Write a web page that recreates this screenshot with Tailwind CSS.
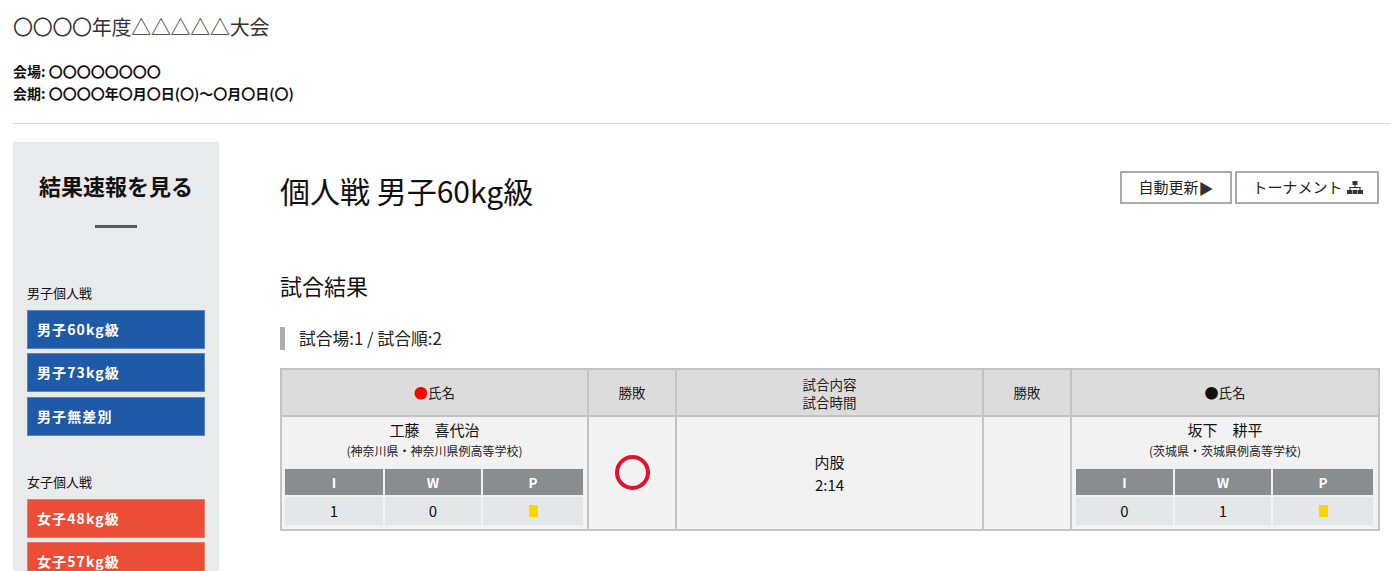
<!DOCTYPE html>
<html lang="ja">
<head>
<meta charset="utf-8">
<script src="https://cdn.jsdelivr.net/npm/@tailwindcss/browser@4"></script>
</head>
<body class="h-[571px] overflow-hidden bg-white text-[#111] font-['Noto_Sans_CJK_JP','Noto_Sans',sans-serif]">
<header class="ml-[13px] h-[124px] border-b border-[#ddd] pt-[12px]">
  <h1 class="text-[20px] leading-[30px] font-normal tracking-[-0.3px] text-[#333]">〇〇〇〇年度△△△△△大会</h1>
  <div class="mt-[18px] text-[14px] leading-[22px] font-bold">
    <p>会場: 〇〇〇〇〇〇〇〇</p>
    <p>会期: 〇〇〇〇年〇月〇日(〇)～〇月〇日(〇)</p>
  </div>
</header>
<div class="flex mt-[18px] ml-[13px] mr-[12px] items-start">
  <aside class="w-[206px] h-[440px] shrink-0 bg-[#e9eaec] px-[14px]">
    <h2 class="mt-[26px] text-center text-[22px] leading-[34px] font-bold">結果速報を見る</h2>
    <div class="mx-auto mt-[23px] h-[3px] w-[42px] bg-[#5b5b5b]"></div>
    <p class="mt-[56px] text-[13px] leading-[18px]">男子個人戦</p>
    <ul class="mt-[8px] flex flex-col gap-[4.4px] text-[14px] font-bold tracking-[1.1px] text-white">
      <li class="h-[39px] border border-[#5c84bd] bg-[#1f5aa9] pl-[9px] leading-[36px]">男子60kg級</li>
      <li class="h-[39px] border border-[#5c84bd] bg-[#1f5aa9] pl-[9px] leading-[36px]">男子73kg級</li>
      <li class="h-[39px] border border-[#5c84bd] bg-[#1f5aa9] pl-[9px] leading-[36px]">男子無差別</li>
    </ul>
    <p class="mt-[37px] text-[13px] leading-[18px]">女子個人戦</p>
    <ul class="mt-[8px] flex flex-col gap-[4.4px] text-[14px] font-bold tracking-[1.1px] text-white">
      <li class="h-[39px] border border-[#f0796a] bg-[#ec4d37] pl-[9px] leading-[36px]">女子48kg級</li>
      <li class="h-[39px] border border-[#f0796a] bg-[#ec4d37] pl-[9px] leading-[37px]">女子57kg級</li>
    </ul>
  </aside>
  <main class="ml-[61px] min-w-0 flex-1">
    <div class="flex items-start justify-between">
      <h2 class="mt-[26px] text-[30px] leading-[44px] font-normal">個人戦 男子60kg級</h2>
      <div class="mt-[29px] flex gap-[3px] text-[15px]">
        <div class="flex h-[33px] w-[112px] items-center justify-center border-2 border-[#aaa] pb-[1px] text-[#222]">自動更新<span class="text-[15px] leading-none text-[#333]">▶</span></div>
        <div class="flex h-[33px] w-[144px] items-center justify-center border-2 border-[#aaa] pb-[1px] pl-[1px] text-[#222]">トーナメント<svg class="ml-[4px] h-[13px] w-[16px]" viewBox="0 0 16 13" fill="#2f3640"><rect x="5.5" y="0" width="5" height="4"/><rect x="7.5" y="4" width="1" height="3"/><rect x="2.5" y="6" width="11" height="1"/><rect x="2.5" y="6" width="1" height="3"/><rect x="12.5" y="6" width="1" height="3"/><rect x="0" y="9" width="5" height="4"/><rect x="5.5" y="9" width="5" height="4"/><rect x="11" y="9" width="5" height="4"/></svg></div>
      </div>
    </div>
    <h3 class="mt-[57px] text-[22px] leading-[32px] font-normal">試合結果</h3>
    <p class="mt-[26px] h-[23px] border-l-[5px] border-[#adadad] pl-[14px] text-[16.8px] leading-[23px] text-[#222]">試合場:1 / 試合順:2</p>
    <table class="mt-[18px] w-[1098px] table-fixed border-collapse text-center text-[13.5px] text-[#222]">
      <colgroup><col class="w-[307px]"><col class="w-[88px]"><col class="w-[307px]"><col class="w-[88px]"><col class="w-[308px]"></colgroup>
      <thead class="bg-[#dcdcdc]">
        <tr class="h-[47px]">
          <th class="border-2 border-[#c4c4c4] font-normal"><span class="text-[14px] text-[#f00]">●</span>氏名</th>
          <th class="border-2 border-[#c4c4c4] font-normal">勝敗</th>
          <th class="border-2 border-[#c4c4c4] font-normal leading-[18px]">試合内容<br>試合時間</th>
          <th class="border-2 border-[#c4c4c4] font-normal">勝敗</th>
          <th class="border-2 border-[#c4c4c4] font-normal"><span class="text-[14px] text-[#111]">●</span>氏名</th>
        </tr>
      </thead>
      <tbody class="bg-[#f2f2f2]">
        <tr class="h-[114px]">
          <td class="border-2 border-[#c4c4c4] px-[3px] pt-[1px] align-top">
            <p class="text-[15px] leading-[24px] text-[#111]">工藤　喜代治</p>
            <p class="mt-[1px] text-[12px] leading-[16px]">(神奈川県・神奈川県例高等学校)</p>
            <div class="mt-[10px] grid grid-cols-[98px_96px_100px] gap-[2px]">
              <div class="h-[26px] bg-[#8a8d90] text-[13.5px] font-bold leading-[27px] text-white">I</div>
              <div class="h-[26px] bg-[#8a8d90] text-[13.5px] font-bold leading-[27px] text-white">W</div>
              <div class="h-[26px] bg-[#8a8d90] text-[13.5px] font-bold leading-[27px] text-white">P</div>
              <div class="h-[28px] bg-[#e4e7e8] text-[15px] leading-[28px] text-[#111]">1</div>
              <div class="h-[28px] bg-[#e4e7e8] text-[15px] leading-[28px] text-[#111]">0</div>
              <div class="flex h-[28px] items-center justify-center bg-[#e4e7e8]"><span class="h-[12px] w-[9px] bg-[#ffd400]"></span></div>
            </div>
          </td>
          <td class="border-2 border-[#c4c4c4] align-middle">
            <div class="mx-auto mb-[1px] h-[35px] w-[35px] rounded-full border-[4px] border-[#e60f2d]"></div>
          </td>
          <td class="border-2 border-[#c4c4c4] align-middle text-[15px] leading-[23px] text-[#111]">内股<br>2:14</td>
          <td class="border-2 border-[#c4c4c4]"></td>
          <td class="border-2 border-[#c4c4c4] px-[4px] pt-[1px] align-top">
            <p class="text-[15px] leading-[24px] text-[#111]">坂下　耕平</p>
            <p class="mt-[1px] text-[12px] leading-[16px]">(茨城県・茨城県例高等学校)</p>
            <div class="mt-[10px] grid grid-cols-[97px_96px_100px] gap-[2px]">
              <div class="h-[26px] bg-[#8a8d90] text-[13.5px] font-bold leading-[27px] text-white">I</div>
              <div class="h-[26px] bg-[#8a8d90] text-[13.5px] font-bold leading-[27px] text-white">W</div>
              <div class="h-[26px] bg-[#8a8d90] text-[13.5px] font-bold leading-[27px] text-white">P</div>
              <div class="h-[28px] bg-[#e4e7e8] text-[15px] leading-[28px] text-[#111]">0</div>
              <div class="h-[28px] bg-[#e4e7e8] text-[15px] leading-[28px] text-[#111]">1</div>
              <div class="flex h-[28px] items-center justify-center bg-[#e4e7e8]"><span class="h-[12px] w-[9px] bg-[#ffd400]"></span></div>
            </div>
          </td>
        </tr>
      </tbody>
    </table>
  </main>
</div>
</body>
</html>
